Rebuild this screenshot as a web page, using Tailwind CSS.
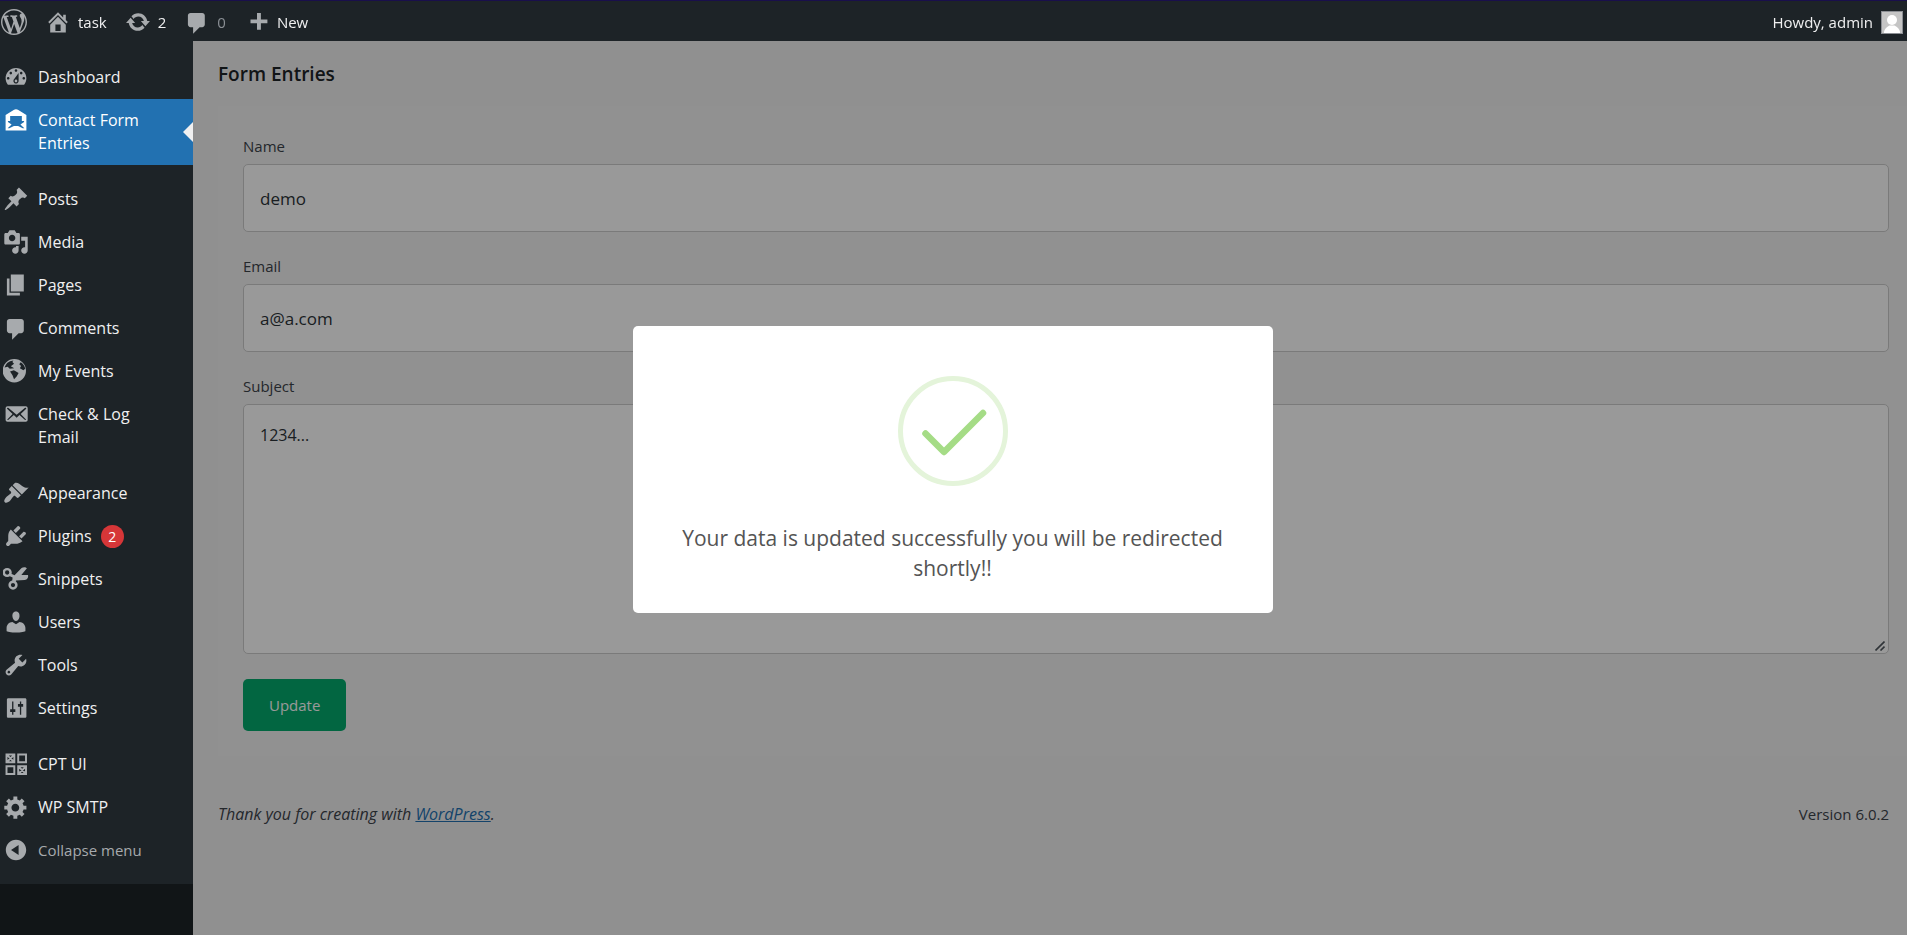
<!DOCTYPE html>
<html lang="en">
<head>
<meta charset="utf-8">
<meta name="viewport" content="width=device-width, initial-scale=1">
<title>Form Entries</title>
<script src="https://cdn.jsdelivr.net/npm/@tailwindcss/browser@4"></script>
</head>
<body class="min-h-screen bg-[#f0f0f1] font-['Open_Sans','Noto_Sans',sans-serif] text-[#3c434a]">

<svg class="hidden" aria-hidden="true">
  <symbol id="i-wp" viewBox="0 0 20 20"><path d="M20 10c0-5.51-4.49-10-10-10C4.48 0 0 4.49 0 10c0 5.52 4.48 10 10 10 5.51 0 10-4.48 10-10zM7.78 15.37L4.37 6.22c.55-.02 1.17-.08 1.17-.08.5-.06.44-1.13-.06-1.11 0 0-1.45.11-2.37.11-.18 0-.37 0-.58-.01C4.12 2.69 6.87 1.11 10 1.11c2.33 0 4.45.87 6.05 2.34-.68-.11-1.65.39-1.65 1.58 0 .74.45 1.36.9 2.1.35.61.55 1.36.55 2.46 0 1.49-1.4 5-1.4 5l-3.03-8.37c.54-.02.82-.17.82-.17.5-.05.44-1.25-.06-1.22 0 0-1.44.12-2.38.12-.87 0-2.33-.12-2.33-.12-.5-.03-.56 1.2-.06 1.22l.92.08 1.26 3.41zM17.41 10c.24-.64.74-1.87.43-4.25.7 1.29 1.05 2.71 1.05 4.25 0 3.29-1.73 6.24-4.4 7.78.97-2.59 1.94-5.2 2.92-7.78zM6.1 18.09C3.12 16.65 1.11 13.53 1.11 10c0-1.3.23-2.48.72-3.59C3.25 10.3 4.67 14.2 6.1 18.09zm4.03-6.63l2.58 6.98c-.86.29-1.76.45-2.71.45-.79 0-1.57-.11-2.29-.33.81-2.38 1.62-4.74 2.42-7.1z"/></symbol>
  <symbol id="i-home" viewBox="0 0 20 20"><path d="M16 8.5l1.53 1.53-1.06 1.06L10 4.6l-6.47 6.49-1.06-1.06L10 2.5l4 4v-2h2v4zm-6-2.46l6 5.99V18H4v-5.97zM12 17v-5H8v5h4z"/></symbol>
  <symbol id="i-update" viewBox="0 0 20 20"><path d="M10.2 3.28c3.53 0 6.43 2.61 6.92 6h2.08l-3.5 4-3.5-4h2.32c-.45-1.97-2.21-3.45-4.32-3.45-1.45 0-2.73.71-3.54 1.78L4.95 5.66C6.23 4.2 8.11 3.28 10.2 3.28zm-.4 13.44c-3.52 0-6.43-2.61-6.92-6H.8l3.5-4c1.17 1.33 2.33 2.67 3.5 4H5.48c.45 1.97 2.21 3.45 4.32 3.45 1.45 0 2.73-.71 3.54-1.78l1.71 1.95c-1.28 1.46-3.15 2.38-5.25 2.38z"/></symbol>
  <symbol id="i-comment" viewBox="0 -1 20 20"><path d="M5 2h9c1.1 0 2 .9 2 2v7c0 1.1-.9 2-2 2h-2l-5 5v-5H5c-1.1 0-2-.9-2-2V4c0-1.1.9-2 2-2z"/></symbol>
  <symbol id="i-plus" viewBox="0 0 20 20"><path d="M18 8v3h-5v5h-3v-5H5V8h5V3h3v5h5z"/></symbol>
  <symbol id="i-dashboard" viewBox="0 0 20 20"><path d="M3.76 16h12.48c1.1-1.37 1.76-3.11 1.76-5 0-4.42-3.58-8-8-8s-8 3.58-8 8c0 1.89.66 3.63 1.76 5zM10 4c.55 0 1 .45 1 1s-.45 1-1 1-1-.45-1-1 .45-1 1-1zM6 6c.55 0 1 .45 1 1s-.45 1-1 1-1-.45-1-1 .45-1 1-1zm8 0c.55 0 1 .45 1 1s-.45 1-1 1-1-.45-1-1 .45-1 1-1zm-5.37 5.55L12 7v6c0 1.1-.9 2-2 2s-2-.9-2-2c0-.57.24-1.08.63-1.45zM4 10c.55 0 1 .45 1 1s-.45 1-1 1-1-.45-1-1 .45-1 1-1zm12 0c.55 0 1 .45 1 1s-.45 1-1 1-1-.45-1-1 .45-1 1-1zm-5 3c0-.55-.45-1-1-1s-1 .45-1 1 .45 1 1 1 1-.45 1-1z"/></symbol>
  <symbol id="i-letter" viewBox="0 0 20 20"><path fill-rule="evenodd" d="M2 6.100L8.200 2.300q1.800-1 3.600 0L18 6.100V18H2zM5.500 7v3.800H3.800v.8l2.800 1.800-3 3h1.200L8.400 14.600h3.200l3.600 1.800h1.200l-3-3 2.800-1.800v-.8h-1.700V7z"/></symbol>
  <symbol id="i-post" viewBox="0 0 20 20"><path d="M10.44 3.02l1.82-1.82 6.36 6.35-1.83 1.82c-1.05-.68-2.48-.57-3.41.36l-.75.75c-.92.93-1.04 2.35-.35 3.41l-1.83 1.82-2.41-2.41-2.8 2.79c-.42.42-3.38 2.71-3.8 2.29s1.86-3.39 2.28-3.81l2.79-2.79L4.1 9.36l1.83-1.82c1.05.69 2.48.57 3.4-.36l.75-.75c.93-.92 1.05-2.35.36-3.41z"/></symbol>
  <symbol id="i-media" viewBox="0 0 20 20"><path d="M13 11V4c0-.55-.45-1-1-1h-1.67L9 1H5L3.67 3H2c-.55 0-1 .45-1 1v7c0 .55.45 1 1 1h10c.55 0 1-.45 1-1zM7 4.5c1.38 0 2.5 1.12 2.5 2.5S8.38 9.5 7 9.5 4.5 8.38 4.5 7 5.62 4.5 7 4.5zM14 6h5v10.5c0 1.38-1.12 2.5-2.5 2.5S14 17.88 14 16.5s1.12-2.5 2.5-2.5c.17 0 .34.02.5.05V9h-3V6zm-4 8.05V13h2v3.5c0 1.38-1.12 2.5-2.5 2.5S7 17.88 7 16.5 8.12 14 9.5 14c.17 0 .34.02.5.05z"/></symbol>
  <symbol id="i-page" viewBox="0 0 20 20"><path d="M6 15V2h10v13H6zm-1 1h8v2H3V5h2v11z"/></symbol>
  <symbol id="i-globe" viewBox="0 0 20 20"><path fill-rule="evenodd" d="M8.700.8a9 9 0 1 0 0 18 9 9 0 0 0 0-18zM3.200 3.900Q5.200 2.200 8 1.900L7.200 3l1.300 1.400L6 6.400 8.600 7.800 5.200 8.300 3.600 6.800 1.200 7.400Q1.900 5.400 3.200 3.900zM5.400 10.300l3-.8 3.600 2.100-1.500 2.600-2 2.200-1.200-3.200zM13.600 3.300q2.800 1.700 3.500 5l-1.400 1.200L13 7.800l.9-1.600-1.400-1.400z"/></symbol>
  <symbol id="i-mail" viewBox="0 0 20 20"><path d="M19 14.5v-9c0-.83-.67-1.5-1.5-1.5H3.49c-.83 0-1.5.67-1.5 1.5v9c0 .83.67 1.5 1.5 1.500H17.5c.83 0 1.5-.67 1.5-1.5zm-1.31-9.11c.33.33.15.67-.03.84L13.6 9.95l3.9 4.06c.12.14.2.36.06.51-.13.16-.43.15-.56.05l-4.37-3.73-2.14 1.95-2.13-1.950-4.37 3.73c-.13.1-.43.11-.56-.05-.14-.15-.06-.37.06-.51l3.9-4.06-4.06-3.72c-.18-.17-.36-.51-.03-.84s.67-.17.95.07l6.24 5.04 6.25-5.04c.28-.24.62-.4.95-.07z"/></symbol>
  <symbol id="i-brush" viewBox="0 0 20 20"><path d="M14.48 11.06L7.41 3.99l1.5-1.5c.5-.56 2.3-.47 3.51.32 1.21.8 1.43 1.28 2.91 2.1 1.18.64 2.45 1.26 4.45.85zm-.71.71L6.7 4.7 4.93 6.47c-.39.39-.39 1.02 0 1.41l1.06 1.06c.39.39.39 1.03 0 1.42-.6.6-1.43 1.11-2.21 1.69-.35.26-.7.53-1.01.84C1.43 14.23.4 16.08 1.4 17.07c.99 1 2.84-.03 4.18-1.36.31-.31.58-.66.85-1.02.57-.78 1.08-1.61 1.69-2.21.39-.39 1.02-.39 1.41 0l1.06 1.06c.39.39 1.02.39 1.41 0z"/></symbol>
  <symbol id="i-plug" viewBox="0 0 20 20"><path d="M13.11 4.36L9.87 7.6 8 5.73l3.24-3.24c.35-.34 1.05-.2 1.56.32.52.51.66 1.21.31 1.55zm-8 1.77l.91-1.12 9.01 9.01-1.19.84c-.71.71-2.63 1.16-3.82 1.16H6.14L4.9 17.26c-.59.59-1.54.59-2.12 0-.59-.58-.59-1.53 0-2.12l1.24-1.24v-3.88c0-1.13.4-3.19 1.09-3.89zm7.26 3.97l3.24-3.24c.34-.35 1.04-.21 1.55.31.52.51.66 1.21.31 1.55l-3.24 3.25z"/></symbol>
  <symbol id="i-scissors" viewBox="0 0 20 20"><g fill="none" stroke="currentColor" stroke-width="1.900"><circle cx="3.200" cy="5" r="2.600"/><circle cx="7.700" cy="14.700" r="2.600"/></g><path d="M5.500 5.500l3.400 1.600 5.400-5.500c1.100-1 3.300-1 4.100.2l-4.300 5.200h5.100c.6 1.700-.6 3.700-2.500 3.800l-6.700.3-.6 2.400-2.500-.9.500-3.800-3-1.300z"/></symbol>
  <symbol id="i-user" viewBox="0 0 20 20"><path d="M10 9.25c-2.27 0-2.73-3.44-2.73-3.44C7 4.02 7.82 2 9.97 2c2.16 0 2.98 2.02 2.71 3.81 0 0-.41 3.44-2.68 3.44zm0 2.57L12.72 10c2.39 0 4.52 2.33 4.52 4.53v2.49s-3.65 1.13-7.24 1.13c-3.65 0-7.24-1.13-7.24-1.13v-2.49c0-2.25 1.94-4.48 4.47-4.48z"/></symbol>
  <symbol id="i-wrench" viewBox="0 0 20 20"><path d="M16.68 9.77c-1.34 1.34-3.3 1.67-4.95.99l-5.41 6.52c-.99.99-2.59.99-3.58 0s-.99-2.59 0-3.57l6.52-5.42c-.68-1.65-.35-3.61.99-4.95 1.28-1.28 3.12-1.62 4.72-1.06l-2.89 2.89 2.82 2.82 2.86-2.87c.53 1.58.18 3.39-1.08 4.65zM3.81 16.21c.4.39 1.04.39 1.43 0 .4-.4.4-1.04 0-1.43-.39-.4-1.03-.4-1.43 0-.39.39-.39 1.03 0 1.43z"/></symbol>
  <symbol id="i-sliders" viewBox="0 0 20 20"><path fill-rule="evenodd" d="M18 16.500V3.500c0-.55-.45-1-1-1H4c-.55 0-1 .45-1 1v13c0 .55.45 1 1 1h13c.55 0 1-.45 1-1zM8 11h1.500v2H8v2.200H7V13H5.500v-2H7V5h1zM13 7V5h1v2h1.500v2H14v6.200h-1V9h-1.500V7z"/></symbol>
  <symbol id="i-blocks" viewBox="0 0 20 20"><g fill="none" stroke="currentColor" stroke-width="1.500"><path d="M2.700 2.700h6v6h-6zM11.700 2.700h6v6h-6zM2.700 11.700h6v6h-6zM11.700 11.700h6v6h-6zM3 3l5.500 5.500M8.500 3L3 8.500M12 12l5.500 5.500M17.500 12L12 17.500"/></g></symbol>
  <symbol id="i-gear" viewBox="0 0 20 20"><path d="M18 12h-2.18c-.17.7-.44 1.35-.81 1.93l1.54 1.54-2.1 2.1-1.54-1.54c-.58.36-1.23.63-1.91.79V19H8v-2.18c-.68-.16-1.33-.43-1.91-.79l-1.54 1.54-2.12-2.12 1.54-1.54c-.36-.58-.63-1.23-.79-1.91H1V9.03h2.17c.16-.7.44-1.35.8-1.94L2.43 5.55l2.1-2.1 1.54 1.54c.58-.37 1.24-.64 1.93-.81V2h3v2.18c.68.16 1.33.43 1.91.79l1.54-1.54 2.12 2.12-1.54 1.54c.36.59.64 1.24.8 1.94H18V12zm-8.500 1.500c1.660 0 3-1.340 3-3s-1.340-3-3-3-3 1.340-3 3 1.340 3 3 3z"/></symbol>
  <symbol id="i-collapse" viewBox="0 0 20 20"><path d="M10 2.160c4.330 0 7.840 3.510 7.840 7.840s-3.510 7.840-7.840 7.840S2.160 14.330 2.160 10 5.710 2.160 10 2.160zm2 11.720V6.120L6.180 9.970z"/></symbol>
</svg>

<header class="fixed inset-x-0 top-0 z-30 flex h-[41px] items-center border-t border-[#190f4b] bg-[#1d2327] pt-0.5 pr-1 pl-px text-[15px] leading-6 text-[#f0f0f1]">
  <a href="#" aria-label="About WordPress" class="text-[#a7aaad]"><svg class="size-[26px] fill-current"><use href="#i-wp"/></svg></a>
  <a href="#" class="ml-[18px] flex items-center gap-[7px]"><svg class="size-[26px] fill-[#a7aaad]"><use href="#i-home"/></svg>task</a>
  <a href="#" class="ml-[18px] flex items-center gap-[7px]" aria-label="2 updates"><svg class="size-[26px] fill-[#a7aaad]"><use href="#i-update"/></svg>2</a>
  <a href="#" class="ml-[18px] flex items-center gap-[7px] text-[#8a8f94]" aria-label="0 comments"><svg class="size-[26px] fill-[#a7aaad]"><use href="#i-comment"/></svg>0</a>
  <a href="#" class="ml-[18px] flex items-center gap-[7px]"><svg class="size-[26px] fill-[#a7aaad]"><use href="#i-plus"/></svg>New</a>
  <a href="#" class="ml-auto flex items-center gap-2">Howdy, admin
    <svg class="h-[23px] w-[22px] border border-[#8c8f94] bg-[#c5c5c5]" viewBox="0 0 20 21" preserveAspectRatio="none"><circle cx="10" cy="8" r="5" fill="#fff"/><path d="M2 21q0-5 5.500-7.500h5Q18 16 18 21z" fill="#fff"/></svg>
  </a>
</header>

<div class="flex min-h-screen pt-[41px]">
  <div class="w-[193px] shrink-0 bg-[#1d2327]">
    <nav aria-label="Main menu" class="relative z-20 bg-[#1d2327] pt-[15px] pb-3 text-base leading-[23px] text-[#f0f0f1]">
      <ul>
        <li><a href="#" class="flex gap-[9px] py-[10px] pr-2 pl-[3px]"><svg class="-my-0.5 size-[26px] shrink-0 fill-[#a7aaad]"><use href="#i-dashboard"/></svg>Dashboard</a></li>
        <li class="relative bg-[#2271b1]"><a href="#" aria-current="page" class="flex gap-[9px] py-[10px] pr-8 pl-[3px] text-white"><svg class="-my-0.5 size-[26px] shrink-0 fill-white"><use href="#i-letter"/></svg>Contact Form Entries</a>
          <span class="absolute top-1/2 right-0 -translate-y-1/2 border-y-10 border-r-10 border-y-transparent border-r-[#f0f0f1]"></span></li>
      </ul>
      <ul class="mt-[13px]">
        <li><a href="#" class="flex gap-[9px] py-[10px] pr-2 pl-[3px]"><svg class="-my-0.5 size-[26px] shrink-0 fill-[#a7aaad]"><use href="#i-post"/></svg>Posts</a></li>
        <li><a href="#" class="flex gap-[9px] py-[10px] pr-2 pl-[3px]"><svg class="-my-0.5 size-[26px] shrink-0 fill-[#a7aaad]"><use href="#i-media"/></svg>Media</a></li>
        <li><a href="#" class="flex gap-[9px] py-[10px] pr-2 pl-[3px]"><svg class="-my-0.5 size-[26px] shrink-0 fill-[#a7aaad]"><use href="#i-page"/></svg>Pages</a></li>
        <li><a href="#" class="flex gap-[9px] py-[10px] pr-2 pl-[3px]"><svg class="-my-0.5 size-[26px] shrink-0 fill-[#a7aaad]"><use href="#i-comment"/></svg>Comments</a></li>
        <li><a href="#" class="flex gap-[9px] py-[10px] pr-2 pl-[3px]"><svg class="-my-0.5 size-[26px] shrink-0 fill-[#a7aaad]"><use href="#i-globe"/></svg>My Events</a></li>
        <li><a href="#" class="flex gap-[9px] py-[10px] pr-8 pl-[3px]"><svg class="-my-0.5 size-[26px] shrink-0 fill-[#a7aaad]"><use href="#i-mail"/></svg>Check &amp; Log Email</a></li>
      </ul>
      <ul class="mt-[13px]">
        <li><a href="#" class="flex gap-[9px] py-[10px] pr-2 pl-[3px]"><svg class="-my-0.5 size-[26px] shrink-0 fill-[#a7aaad]"><use href="#i-brush"/></svg>Appearance</a></li>
        <li><a href="#" class="flex gap-[9px] py-[10px] pr-2 pl-[3px]"><svg class="-my-0.5 size-[26px] shrink-0 fill-[#a7aaad]"><use href="#i-plug"/></svg><span class="flex items-center gap-[9px]">Plugins <span class="flex size-[23px] items-center justify-center rounded-full bg-[#d63638] text-sm text-white">2</span></span></a></li>
        <li><a href="#" class="flex gap-[9px] py-[10px] pr-2 pl-[3px]"><svg class="-my-0.5 size-[26px] shrink-0 fill-[#a7aaad] text-[#a7aaad]"><use href="#i-scissors"/></svg>Snippets</a></li>
        <li><a href="#" class="flex gap-[9px] py-[10px] pr-2 pl-[3px]"><svg class="-my-0.5 size-[26px] shrink-0 fill-[#a7aaad]"><use href="#i-user"/></svg>Users</a></li>
        <li><a href="#" class="flex gap-[9px] py-[10px] pr-2 pl-[3px]"><svg class="-my-0.5 size-[26px] shrink-0 fill-[#a7aaad]"><use href="#i-wrench"/></svg>Tools</a></li>
        <li><a href="#" class="flex gap-[9px] py-[10px] pr-2 pl-[3px]"><svg class="-my-0.5 size-[26px] shrink-0 fill-[#a7aaad]"><use href="#i-sliders"/></svg>Settings</a></li>
      </ul>
      <ul class="mt-[13px]">
        <li><a href="#" class="flex gap-[9px] py-[10px] pr-2 pl-[3px]"><svg class="-my-0.5 size-[26px] shrink-0 text-[#a7aaad]"><use href="#i-blocks"/></svg>CPT UI</a></li>
        <li><a href="#" class="flex gap-[9px] py-[10px] pr-2 pl-[3px]"><svg class="-my-0.5 size-[26px] shrink-0 fill-[#a7aaad]"><use href="#i-gear"/></svg>WP SMTP</a></li>
        <li><button type="button" class="flex gap-[9px] py-[10px] pr-2 pl-[3px] text-[15px] leading-[23px] text-[#a7aaad]"><svg class="-my-0.5 size-[26px] shrink-0 fill-[#a7aaad]"><use href="#i-collapse"/></svg>Collapse menu</button></li>
      </ul>
    </nav>
  </div>

  <div class="min-w-0 flex-1 pl-[25px] text-[15px] leading-6">
    <h1 class="pt-5 pb-[18px] text-[19px] leading-[27px] font-semibold text-[#1d2327]">Form Entries</h1>
    <form class="bg-[#f2f2f2] py-[25px] pr-[18px] pl-[25px]" onsubmit="return false">
      <label for="name" class="block pt-[3px] pb-[6px]">Name</label>
      <input id="name" type="text" value="demo" class="mb-[22px] block h-[68px] w-full rounded-[5px] border border-[#ccc] bg-white px-4 text-[17px] text-[#2c3338]">
      <label for="email" class="block pb-[6px]">Email</label>
      <input id="email" type="email" value="a@a.com" class="mb-[22px] block h-[68px] w-full rounded-[5px] border border-[#ccc] bg-white px-4 text-[17px] text-[#2c3338]">
      <label for="subject" class="block pb-[6px]">Subject</label>
      <div class="relative">
        <textarea id="subject" class="block h-[250px] w-full resize-none rounded-[5px] border border-[#ccc] bg-white px-4 py-[18px] text-base text-[#2c3338]">1234...</textarea>
        <svg class="absolute right-1 bottom-[3px] size-[10px] stroke-[#50575e]" viewBox="0 0 10 10" stroke-width="1.600" aria-hidden="true"><path d="M.5 9.500l9-9M5.500 9.500l4-4"/></svg>
      </div>
      <button type="submit" class="mt-[25px] block h-[52px] rounded-[5px] bg-[#04aa6d] px-[26px] text-white">Update</button>
    </form>
    <footer class="flex justify-between pt-[46px] pr-[18px]">
      <p class="text-base italic">Thank you for creating with <a href="#" class="text-[#2271b1] underline">WordPress</a>.</p>
      <p>Version 6.0.2</p>
    </footer>
  </div>
</div>

<div class="fixed inset-0 z-10 flex items-center justify-center bg-black/40 pr-0.5">
  <div role="dialog" aria-modal="true" aria-describedby="msg" class="mt-1 flex w-[640px] flex-col items-center rounded-[5px] bg-white px-10 pt-[50px] pb-[30px]">
    <svg class="size-[110px]" viewBox="0 0 110 110" fill="none" aria-hidden="true">
      <circle cx="55" cy="55" r="52.500" stroke="#e4f4da" stroke-width="5"/>
      <path d="M27.500 57.500L46 76L85 37" stroke="#a5dc86" stroke-width="6.500" stroke-linecap="round" stroke-linejoin="round"/>
    </svg>
    <p id="msg" class="mt-[37px] text-center text-[21px] leading-[30px] text-[#545454]">Your data is updated successfully you will be redirected shortly!!</p>
  </div>
</div>
</body>
</html>
